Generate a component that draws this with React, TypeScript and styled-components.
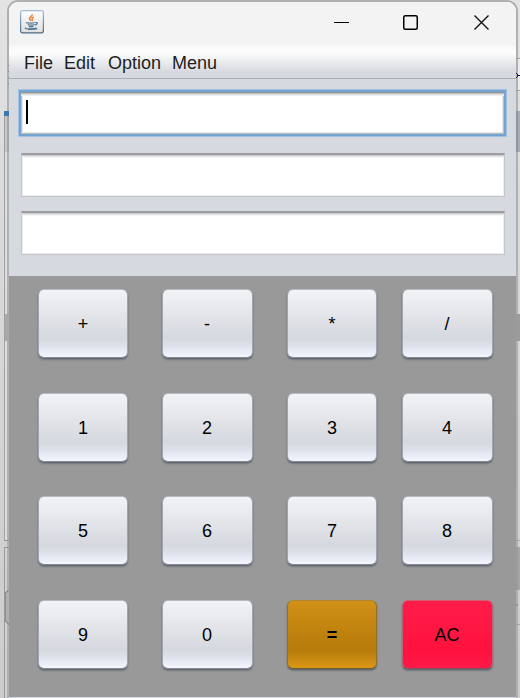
import React from "react";
import styled, { createGlobalStyle } from "styled-components";

const GlobalStyle = createGlobalStyle`
  * { box-sizing: border-box; }
  body { margin: 0; overflow: hidden; background: #d4d4d4; }
`;

const Desktop = styled.div`
  display: grid;
  grid-template-columns: 7px 511px 2px;
  width: 520px;
  height: 698px;
  overflow: hidden;
  background: linear-gradient(#e4e4e4, #dcdcdc 20%, #cccccc);
  font-family: "Liberation Sans", Arial, sans-serif;
`;

const Strip = styled.div`
  display: flex;
  flex-direction: column;
  position: relative;
  z-index: 1;
`;

const Segment = styled.div<{ $h: number; $bg?: string; $edge?: string }>`
  flex: 0 0 ${(p) => p.$h}px;
  background: ${(p) => p.$bg ?? "transparent"};
  ${(p) => p.$edge && `margin-left: 4px; border-left: 1px solid ${p.$edge};`}
`;

const Window = styled.main`
  display: flex;
  flex-direction: column;
  width: 511px;
  height: 698px;
  border: 2px solid #b0b0b0;
  border-bottom: 0;
  border-radius: 11px 11px 0 0;
  background: #f3f3f3;
  overflow: hidden;
`;

const TitleBar = styled.header`
  flex: 0 0 43px;
  display: flex;
  align-items: center;
  justify-content: space-between;
  padding: 0 26px 3px 11px;
  background: #f3f3f3;
`;

const Controls = styled.div`
  display: flex;
  align-items: center;
  gap: 54px;
  padding-top: 1px;

  svg:last-child { margin-left: 2px; }
`;

const MenuBar = styled.nav`
  flex: 0 0 34px;
  display: flex;
  align-items: center;
  padding: 2px 0 0 15px;
  border-bottom: 1px solid #a8adb8;
  background: linear-gradient(#f7f8f8 0, #fdfdfd 8px, #f0f1f3 14px, #d6d9df 27px, #d6d9e0 33px);
  color: #1d1e22;
  font-size: 18px;
  line-height: 22px;
`;

const MenuItem = styled.span<{ $w: number }>`
  flex: 0 0 ${(p) => p.$w}px;
  white-space: nowrap;
`;

const Display = styled.section`
  flex: 0 0 197px;
  display: flex;
  flex-direction: column;
  align-items: flex-start;
  padding: 10px 9px 0;
  background: #d6d9e0;
`;

const Field = styled.div<{ $gap: number }>`
  width: 484px;
  height: 44px;
  margin-top: ${(p) => p.$gap}px;
  margin-left: 3px;
  border: 1px solid #c5c6c8;
  border-top: 2px solid #9b9da1;
  background: #fff;
  box-shadow:
    inset 0 1px #cccccc, inset 0 2px #e5e5e5, inset 0 3px #f5f5f5,
    inset 1px -1px #eeeeee, inset -1px 0 #eeeeee;
`;

const FocusedField = styled.div`
  width: 489px;
  height: 48px;
  padding: 8px 0 0 5px;
  border: 3px solid #73a4d1;
  outline: 1px solid #a4c1df;
  outline-offset: -1px;
  background: #fff;
  box-shadow:
    inset 0 1px #929497, inset 0 2px #bfc0c1, inset 0 3px #dddddd, inset 0 4px #eeeeee,
    inset 1px -1px #bfc0c2, inset -1px 0 #bfc0c2, inset 2px -2px #e7e7e7, inset -2px 0 #e7e7e7;
`;

const Caret = styled.div`
  width: 2px;
  height: 24px;
  background: #000;
`;

const Keypad = styled.section`
  flex: 0 0 421px;
  display: grid;
  grid-template-columns: 124px 125px 115px 90px;
  grid-template-rows: repeat(4, 69px);
  row-gap: 34.5px;
  padding: 13px 0 0 29px;
  background: #999999;
`;

const tones = {
  plain: {
    border: "#b6bbc3 #a0a6b0 #858b96",
    fill: "linear-gradient(#f2f3f6, #e3e5e9 37%, #d5d8df 72%, #dfe2ea 84%, #f3f6ff)",
  },
  gold: {
    border: "#b1862f #92712f #6f5b34",
    fill: "linear-gradient(#d19118, #c48610 35%, #b67b0b 74%, #d99916)",
  },
  red: {
    border: "#d45c70 #a96b76 #8b4c57",
    fill: "linear-gradient(#ff1b4a, #ff1744 40%, #ff113d 75%, #ff1b4a)",
  },
};

const Key = styled.button<{ $tone: keyof typeof tones }>`
  width: 90px;
  height: 69px;
  margin: 0;
  padding: 1px 0 0;
  border: 1px solid;
  border-color: ${(p) => tones[p.$tone].border};
  border-radius: 6px;
  background: ${(p) => tones[p.$tone].fill};
  box-shadow: 0 1px 1px #626870, 0 2px 2px #77797c;
  color: #000;
  font: 18px/22px "Liberation Sans", Arial, sans-serif;
  font-weight: ${(p) => (p.$tone === "gold" ? 700 : 400)};
  text-align: center;

  &:nth-child(4n + 2),
  &:nth-child(4n) {
    width: 91px;
    padding-right: 1px;
  }
`;

const WindowFoot = styled.div`
  flex: 1 0 1px;
  background: #d6d9e0;
`;

function JavaIcon() {
  return (
    <svg width="24" height="24" viewBox="0 0 24 24" aria-label="Java">
      <defs>
        <linearGradient id="tile" x2="0" y2="1">
          <stop stopColor="#fff" />
          <stop offset="1" stopColor="#dedede" />
        </linearGradient>
        <linearGradient id="rim" x2="0" y2="1">
          <stop stopColor="#a4bbd1" />
          <stop offset="1" stopColor="#486b83" />
        </linearGradient>
      </defs>
      <rect x=".6" y=".6" width="22.8" height="22.2" rx="2" fill="url(#tile)" stroke="url(#rim)" strokeWidth="1.2" />
      <path d="M12.3 4.2c.5 2-3.6 3-2.8 4.8.3.7 1 1.1 1.4 1.8M13.8 7c-2 .8-2.3 1.5-1.5 2.4.4.5.1 1-.4 1.5" fill="none" stroke="#e98234" strokeWidth="1.5" />
      <path d="M6.4 12.4c-1 .8 6.4.9 8.2.1M7.8 14.5c1.8.6 4.8.6 6.6 0M8.7 16.4c1.4.5 3.4.5 4.8 0M15.3 12.6c3.1-.8 2.2 2-.5 2.5M5.8 17.7c-3.2 1.2 8 1.7 10.8.3M8 19.4c3.6.2 6.9 0 9.2-.7" fill="none" stroke="#4d7391" strokeWidth="1.15" />
    </svg>
  );
}

const BackdropLayer = styled.svg`
  position: absolute;
  top: 0;
  left: 0;
  overflow: visible;
  pointer-events: none;
`;

function LeftEdgeDetail() {
  return (
    <BackdropLayer width="9" height="698" shapeRendering="crispEdges">
      <rect x="4" y="111" width="5" height="5" fill="#3c77b4" />
      <rect x="5" y="116" width="2" height="36" fill="#c8c8c8" />
      <rect x="7" y="116" width="2" height="36" fill="#a5a5a5" />
      <rect x="5" y="314" width="4" height="27" fill="#a9a9a9" />
      <path d="M8 65.5h1M8 71.5h1M8 77.5h1M8 83.5h1" stroke="#888" />
      <path d="M4 540.5h5M4 547.5h5" stroke="#929292" />
      <path d="M9 590.5H8L5.5 593v28l3 3H9" fill="#b0b0b0" stroke="#8f8f8f" />
    </BackdropLayer>
  );
}

function RightEdgeDetail() {
  return (
    <BackdropLayer width="2" height="698" shapeRendering="crispEdges">
      <path d="M-2 58.5h4M-2 90.5h4M-2 540.5h4M-2 624.5h4" stroke="#a2a2a2" />
      <path d="M-2 73.5l3 2l-3 2M-1 75.5h3" fill="none" stroke="#10164f" />
      <rect x="-2" y="111" width="2" height="41" fill="#8f969f" />
      <rect x="0" y="111" width="2" height="41" fill="#a5adb5" />
      <rect x="-2" y="314" width="4" height="27" fill="#9b9b9b" />
      <rect x="-2" y="547" width="2" height="43" fill="#9b9b9b" />
      <rect x="0" y="547" width="2" height="43" fill="#a6a6a6" />
      <path d="M-2 606l2-2" stroke="#777" />
    </BackdropLayer>
  );
}

const keys = ["+", "-", "*", "/", "1", "2", "3", "4", "5", "6", "7", "8", "9", "0", "=", "AC"];

export default function App() {
  return (
    <>
      <GlobalStyle />
      <Desktop>
        <Strip>
          <Segment $h={111} />
          <Segment $h={429} $edge="#a0a0a0" $bg="#dddddd" />
          <Segment $h={7} />
          <Segment $h={151} $edge="#999999" $bg="#d1d1d1" />
          <LeftEdgeDetail />
        </Strip>
        <Window>
          <TitleBar>
            <JavaIcon />
            <Controls>
              <svg width="15" height="16" viewBox="0 0 15 16" aria-label="Minimize">
                <path d="M0 7.5h15" stroke="#000" />
              </svg>
              <svg width="15" height="16" viewBox="0 0 15 16" aria-label="Maximize">
                <rect x=".75" y=".75" width="13.5" height="13.5" rx="1.5" fill="none" stroke="#000" strokeWidth="1.5" />
              </svg>
              <svg width="16" height="16" viewBox="0 0 16 16" aria-label="Close">
                <path d="m.5 .5 14 14M14.5 .5 .5 14.5" stroke="#111" strokeWidth="1.4" />
              </svg>
            </Controls>
          </TitleBar>
          <MenuBar>
            <MenuItem $w={40}>File</MenuItem>
            <MenuItem $w={44}>Edit</MenuItem>
            <MenuItem $w={64}>Option</MenuItem>
            <MenuItem $w={50}>Menu</MenuItem>
          </MenuBar>
          <Display>
            <FocusedField><Caret /></FocusedField>
            <Field $gap={16} />
            <Field $gap={14} />
          </Display>
          <Keypad>
            {keys.map((key) => (
              <Key key={key} $tone={key === "=" ? "gold" : key === "AC" ? "red" : "plain"}>
                {key}
              </Key>
            ))}
          </Keypad>
          <WindowFoot />
        </Window>
        <Strip>
          <Segment $h={58} />
          <Segment $h={32} $bg="#ececec" />
          <Segment $h={608} />
          <RightEdgeDetail />
        </Strip>
      </Desktop>
    </>
  );
}
